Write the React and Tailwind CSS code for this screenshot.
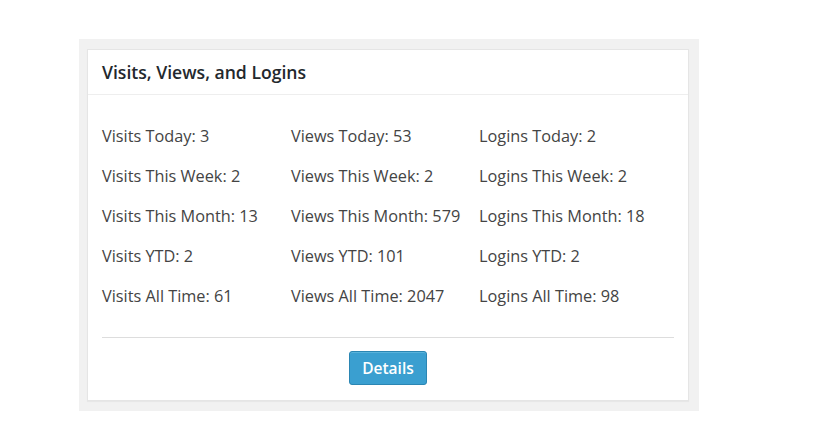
import React from 'react';

const stats = [
  ['Visits Today: 3', 'Views Today: 53', 'Logins Today: 2'],
  ['Visits This Week: 2', 'Views This Week: 2', 'Logins This Week: 2'],
  ['Visits This Month: 13', 'Views This Month: 579', 'Logins This Month: 18'],
  ['Visits YTD: 2', 'Views YTD: 101', 'Logins YTD: 2'],
  ['Visits All Time: 61', 'Views All Time: 2047', 'Logins All Time: 98'],
];

const App = () => {
  return (
    <div className="w-[831px] h-[428px] bg-white pt-[39px] pl-[79px] font-['Open_Sans',sans-serif]">
      <div className="w-[620px] h-[372px] bg-[#f1f1f1] pt-[10px] pl-[8px]">
        {/* Card */}
        <div className="w-[602px] h-[352px] bg-white border border-[#e5e5e5] shadow-[0_1px_1px_rgba(0,0,0,0.04)] flex flex-col">
          {/* Header */}
          <div className="h-[45px] border-b border-[#eeeeee] px-[14px] flex items-center">
            <h2 className="text-[17.6px] font-semibold text-[#23282d]">Visits, Views, and Logins</h2>
          </div>

          {/* Stats */}
          <div className="px-[14px] pt-[21px]">
            {stats.map((row, i) => (
              <div key={i} className="grid grid-cols-[189px_188px_1fr] h-[40px] items-center">
                {row.map((cell) => (
                  <span key={cell} className="text-[16.3px] text-[#444444] leading-[22px]">{cell}</span>
                ))}
              </div>
            ))}
          </div>

          {/* Footer */}
          <div className="mx-[14px] mt-[21px] border-t border-[#dddddd] flex justify-center pt-[13px]">
            <button className="h-[34px] w-[78px] pt-[2px] rounded-[3px] bg-[#3a9fd0] border border-[#2b86b3] text-white text-[15.5px] font-semibold shadow-[inset_0_1px_0_rgba(120,200,230,0.5)]">
              Details
            </button>
          </div>
        </div>
      </div>
    </div>
  );
};

export default App;
